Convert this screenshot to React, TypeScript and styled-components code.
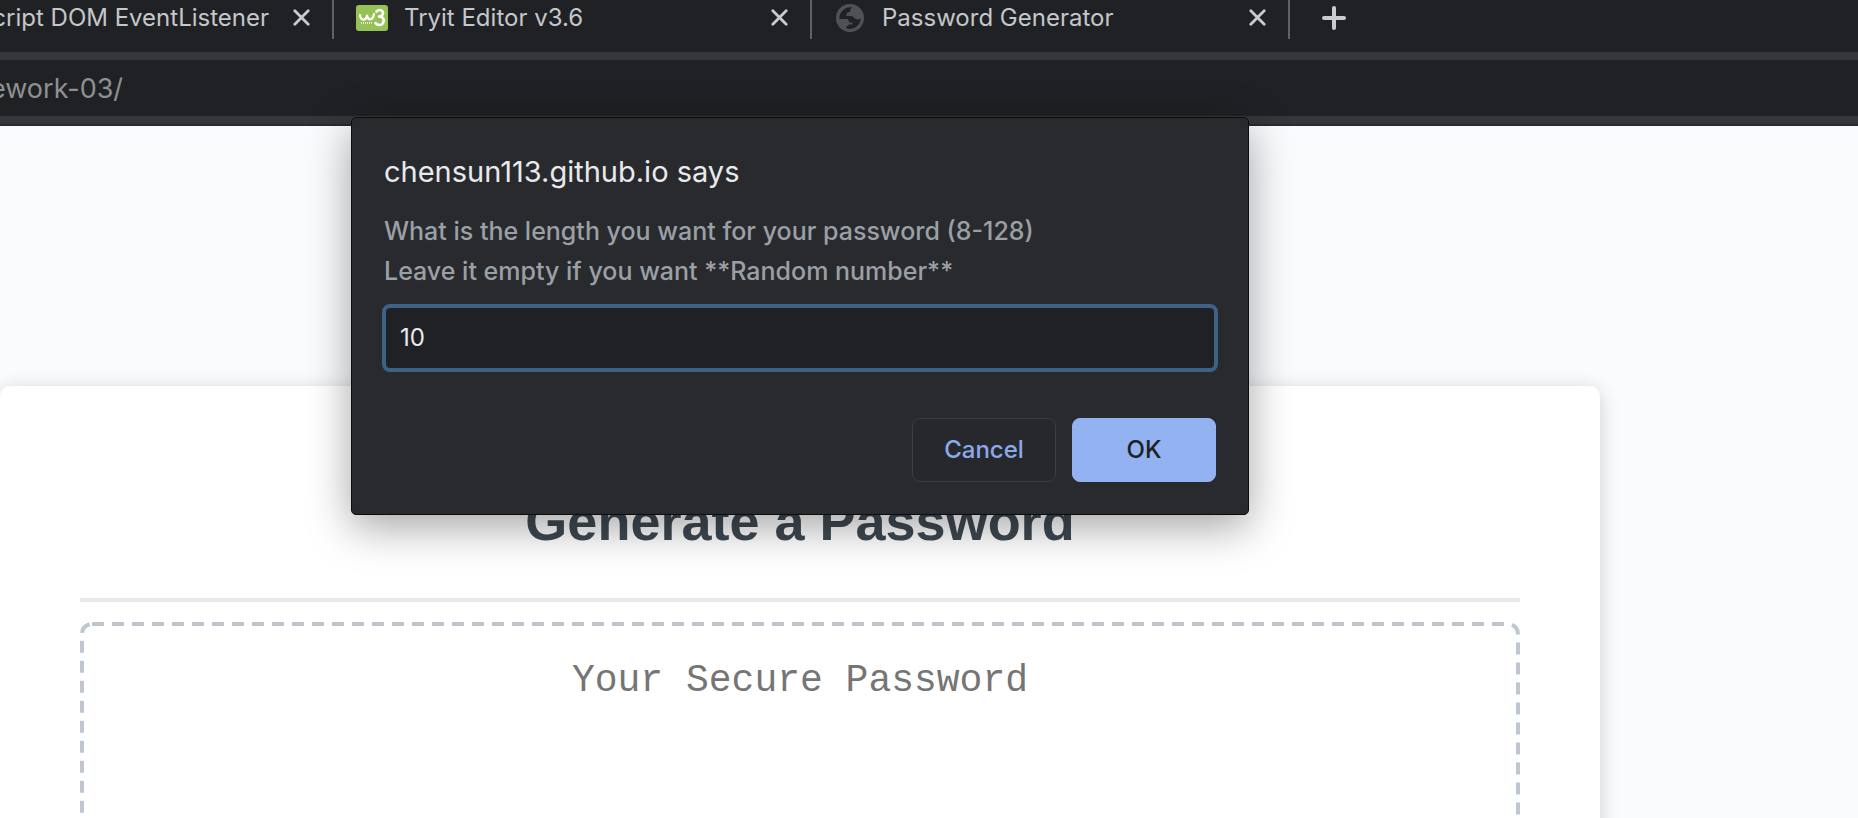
import React from "react";
import styled, { createGlobalStyle } from "styled-components";

const GlobalStyle = createGlobalStyle`
  * { box-sizing: border-box; }
  body {
    margin: 0;
    background: #fafbfd;
    font-family: Inter, "Liberation Sans", sans-serif;
  }
  button, input, textarea { font-family: inherit; }
`;

const Shell = styled.div`
  position: relative;
  display: flex;
  flex-direction: column;
  height: 100vh;
  overflow: hidden;
`;

const TabStrip = styled.nav`
  display: flex;
  flex: none;
  height: 52px;
  background: #202124;
`;

const Tab = styled.div<{ $cut?: boolean }>`
  display: flex;
  align-items: center;
  justify-content: ${(p) => (p.$cut ? "flex-end" : "flex-start")};
  flex: none;
  width: ${(p) => (p.$cut ? 334 : 478)}px;
  height: 39px;
  padding: 0 22px 4px 22px;
  border-right: 2px solid #5f6165;
  overflow: hidden;
`;

const TabIcon = styled.span`
  display: flex;
  justify-content: center;
  flex: none;
  width: 32px;
  margin-right: 16px;
`;

const TabTitle = styled.a<{ $grow?: boolean }>`
  flex: ${(p) => (p.$grow ? "1 1 0" : "none")};
  color: #c4c7cb;
  font-size: 24px;
  line-height: 28px;
  white-space: nowrap;
  text-decoration: none;
`;

const IconButton = styled.button`
  display: flex;
  flex: none;
  padding: 0;
  border: 0;
  background: none;
  color: #c8cbcf;
`;

const CloseButton = styled(IconButton)`
  margin-left: 24px;
`;

const NewTabButton = styled(IconButton)`
  align-self: flex-start;
  margin: 6px 0 0 32px;
`;

const Toolbar = styled.div`
  display: flex;
  flex: none;
  height: 74px;
  border-top: 8px solid #35363a;
  border-bottom: 2px solid #292a2d;
  box-shadow: inset 0 -8px 0 #35363a;
  background: #202124;
`;

const Address = styled.input`
  flex: 1;
  height: 56px;
  padding: 0;
  border: 0;
  background: none;
  color: #8f9092;
  font-size: 27px;
  text-indent: -10px;
  outline: none;
`;

const Page = styled.main`
  flex: 1;
  min-height: 0;
  padding: 260px 258px 0 0;
  background: #fafbfd;
`;

const Card = styled.section`
  display: flex;
  flex-direction: column;
  padding: 104px 80px 80px;
  border-radius: 10px;
  background: #fff;
  box-shadow: 0 4px 20px rgba(0, 0, 0, 0.18);
`;

const Heading = styled.h2`
  margin: 0;
  padding-bottom: 46px;
  border-bottom: 4px solid #e8e9eb;
  color: #3e4952;
  font: bold 54px/62px "Liberation Sans", Arial, sans-serif;
  text-align: center;
`;

const Output = styled.div`
  position: relative;
  display: flex;
  height: 254px;
  margin-top: 20px;
`;

const DashedOutline = styled.svg`
  position: absolute;
  inset: 0;
  width: 100%;
  height: 100%;
  overflow: visible;
  pointer-events: none;
`;

const PasswordBox = styled.textarea`
  flex: 1;
  padding: 37px 40px;
  border: 0;
  background: none;
  resize: none;
  outline: none;
  font: 38px/44px "Liberation Mono", "Courier New", monospace;
  text-align: center;
  &::placeholder { color: #757575; opacity: 1; }
`;

const DialogLayer = styled.div`
  position: absolute;
  top: 117px;
  left: 0;
  right: 258px;
  display: flex;
  justify-content: center;
`;

const Dialog = styled.form`
  display: flex;
  flex-direction: column;
  width: 898px;
  padding: 34px 32px 32px;
  border: 1px solid #0c0c0d;
  border-radius: 5px;
  background: #292a2d;
  box-shadow: 0 12px 44px rgba(0, 0, 0, 0.36);
`;

const DialogTitle = styled.h1`
  margin: 0;
  color: #e8eaed;
  font-size: 29px;
  font-weight: 400;
  line-height: 40px;
`;

const Message = styled.label`
  margin-top: 19px;
  color: #9aa0a6;
  font-size: 25px;
  font-weight: 500;
  line-height: 40px;
  white-space: pre-line;
`;

const Answer = styled.input`
  height: 68px;
  margin: 13px -2px 0;
  padding: 0 14px 1px;
  border: 4px solid #3c6288;
  border-radius: 8px;
  background: #202124;
  color: #e8eaed;
  font-size: 24px;
  outline: none;
`;

const Actions = styled.div`
  display: flex;
  justify-content: flex-end;
  gap: 16px;
  margin-top: 46px;
`;

const ActionButton = styled.button<{ $primary?: boolean }>`
  width: 144px;
  height: 64px;
  padding: 0 0 2px;
  border: 1px solid ${(p) => (p.$primary ? "#93b2f2" : "#3c3d41")};
  border-radius: 8px;
  background: ${(p) => (p.$primary ? "#93b2f2" : "#27282b")};
  color: ${(p) => (p.$primary ? "#202124" : "#8ba9e9")};
  font-size: 24px;
  font-weight: 500;
`;

const CloseIcon = () => (
  <svg width="17" height="17" viewBox="0 0 17 17" stroke="currentColor" strokeWidth="2.8" strokeLinecap="round" aria-hidden="true">
    <path d="M1.8 1.8L15.2 15.2M15.2 1.8L1.8 15.2" />
  </svg>
);

const PlusIcon = () => (
  <svg width="24" height="24" viewBox="0 0 24 24" stroke="currentColor" strokeWidth="4" strokeLinecap="round" aria-hidden="true">
    <path d="M12 2V22M2 12H22" />
  </svg>
);

const SchoolsIcon = () => (
  <svg width="32" height="26" viewBox="0 0 32 26" fill="none" stroke="#fff" strokeLinecap="round" strokeLinejoin="round" aria-hidden="true">
    <rect width="32" height="26" rx="3" fill="#96c255" stroke="none" />
    <path d="M4 10C4.500 16 10 16 11 10.500C12 16 17 15.500 18 9" strokeWidth="2.200" />
    <path d="M20.500 6.500C23.500 3.500 28 5.500 26.800 9.200C26.300 10.800 24.500 11.500 23 11.500C26.500 11.500 28.500 14 27.500 17C26.500 20.500 21.500 21 19.500 18" strokeWidth="2.600" />
    <path d="M5 18H17" strokeWidth="1.800" strokeDasharray="1 1" strokeLinecap="butt" opacity="0.7" />
  </svg>
);

const GlobeIcon = () => (
  <svg width="28" height="28" viewBox="0 0 28 28" aria-hidden="true">
    <circle cx="14" cy="14" r="14" fill="#505155" />
    <path
      fill="#202124"
      d="M14 3.200C10 3.200 5.500 6.500 3.800 11.200C3.300 12.800 3.200 14 3.600 15H10.500C12.500 15 13 16.500 13 18.500H16.500V20.500H12.500V22H10.500V24.500C18 26.500 24.500 21 24.800 14.500C23 15.800 20.500 15.800 19 14.500C17.500 13 17 12 14.500 12H10.500C10 9 11.500 8 14.200 8C14 6 14.500 4.500 16 3.400C15.500 3.200 15 3.200 14 3.200Z"
    />
  </svg>
);

const tabs = [
  { title: "Tryit Editor v3.6", icon: <SchoolsIcon /> },
  { title: "Password Generator", icon: <GlobeIcon /> },
];

export default function App() {
  return (
    <Shell>
      <GlobalStyle />
      <TabStrip aria-label="Tabs">
        <Tab $cut>
          <TabTitle href="#">cript DOM EventListener</TabTitle>
          <CloseButton aria-label="Close tab"><CloseIcon /></CloseButton>
        </Tab>
        {tabs.map((tab) => (
          <Tab key={tab.title}>
            <TabIcon>{tab.icon}</TabIcon>
            <TabTitle href="#" $grow>{tab.title}</TabTitle>
            <CloseButton aria-label="Close tab"><CloseIcon /></CloseButton>
          </Tab>
        ))}
        <NewTabButton aria-label="New tab"><PlusIcon /></NewTabButton>
      </TabStrip>
      <Toolbar>
        <Address aria-label="Address" defaultValue="ework-03/" />
      </Toolbar>
      <Page>
        <Card>
          <Heading>Generate a Password</Heading>
          <Output>
            <DashedOutline aria-hidden="true">
              <rect
                x="2"
                y="2"
                rx="10"
                fill="none"
                stroke="#c0c6cf"
                strokeWidth="4"
                strokeDasharray="12 8"
                style={{ width: "calc(100% - 4px)", height: "calc(100% - 4px)" }}
              />
            </DashedOutline>
            <PasswordBox aria-label="Generated password" placeholder="Your Secure Password" readOnly />
          </Output>
        </Card>
      </Page>
      <DialogLayer>
        <Dialog role="dialog" aria-labelledby="dialog-title" onSubmit={(e) => e.preventDefault()}>
          <DialogTitle id="dialog-title">chensun113.github.io says</DialogTitle>
          <Message htmlFor="answer">
            {"What is the length you want for your password (8-128)\nLeave it empty if you want **Random number**"}
          </Message>
          <Answer id="answer" defaultValue="10" />
          <Actions>
            <ActionButton type="button">Cancel</ActionButton>
            <ActionButton type="submit" $primary>OK</ActionButton>
          </Actions>
        </Dialog>
      </DialogLayer>
    </Shell>
  );
}
